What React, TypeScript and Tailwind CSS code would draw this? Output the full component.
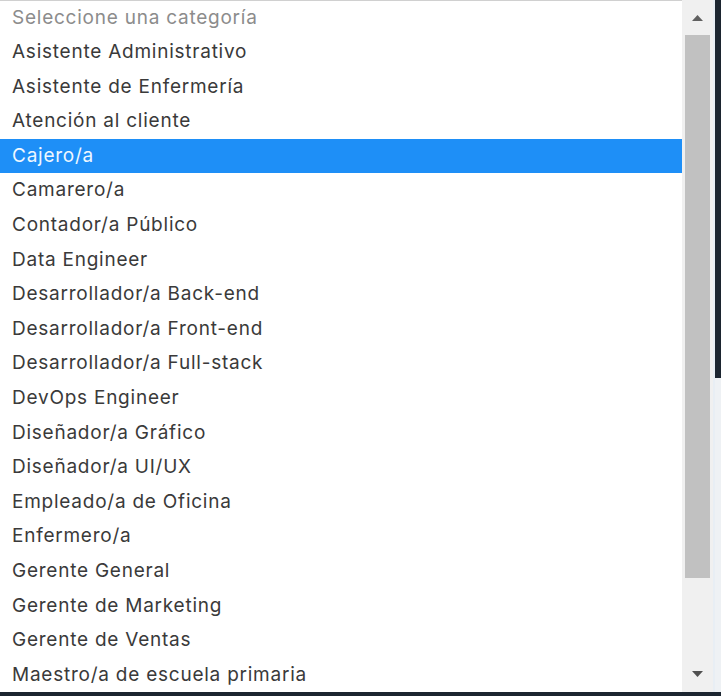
const options = [
  "Asistente Administrativo",
  "Asistente de Enfermería",
  "Atención al cliente",
  "Cajero/a",
  "Camarero/a",
  "Contador/a Público",
  "Data Engineer",
  "Desarrollador/a Back-end",
  "Desarrollador/a Front-end",
  "Desarrollador/a Full-stack",
  "DevOps Engineer",
  "Diseñador/a Gráfico",
  "Diseñador/a UI/UX",
  "Empleado/a de Oficina",
  "Enfermero/a",
  "Gerente General",
  "Gerente de Marketing",
  "Gerente de Ventas",
  "Maestro/a de escuela primaria",
];

const selected = "Cajero/a";

function Scrollbar() {
  return (
    <div className="flex w-[31px] flex-col bg-[#f0f0f0]">
      {/* up button */}
      <div className="flex h-[35px] items-center justify-center">
        <svg width="11" height="6" viewBox="0 0 11 6">
          <path d="M5.5 0 L11 6 L0 6 Z" fill="#606060" />
        </svg>
      </div>
      <div className="mx-[3px] h-[543px] bg-[#c1c1c1]" />
      <div className="flex-1" />
      {/* down button */}
      <div className="flex h-[36px] items-center justify-center">
        <svg width="11" height="6" viewBox="0 0 11 6">
          <path d="M0 0 L11 0 L5.5 6 Z" fill="#505050" />
        </svg>
      </div>
    </div>
  );
}

export default function App() {
  return (
    <div className="flex h-[696px] w-[721px] flex-col bg-white">
      <div className="flex h-[692px]">
        <div
          className="flex-1 overflow-hidden border-t border-[#d0d0d0] text-[19px] tracking-[0.04em] text-[#3a3a3a]"
          style={{ fontFamily: "Inter, 'Open Sans', sans-serif" }}
        >
          <div className="flex h-[34px] items-center pl-[12px] text-[#8c8c8c]">
            Seleccione una categoría
          </div>
          {options.map((o) => (
            <div
              key={o}
              className={
                o === selected
                  ? "flex h-[34.6px] items-center bg-[#1e8ff7] pl-[12px] text-[#eef7ff]"
                  : "flex h-[34.6px] items-center pl-[12px]"
              }
            >
              {o}
            </div>
          ))}
        </div>
        <Scrollbar />
        <div className="w-[2px] bg-[#e8eef4]" />
        {/* dark edge of the window behind */}
        <div className="flex w-[6px] flex-col">
          <div className="h-[378px] bg-[#1c2530]" />
          <div className="flex-1 bg-[#eef1f4]" />
        </div>
      </div>
      <div className="h-[4px] bg-[#1c2530]" />
    </div>
  );
}
